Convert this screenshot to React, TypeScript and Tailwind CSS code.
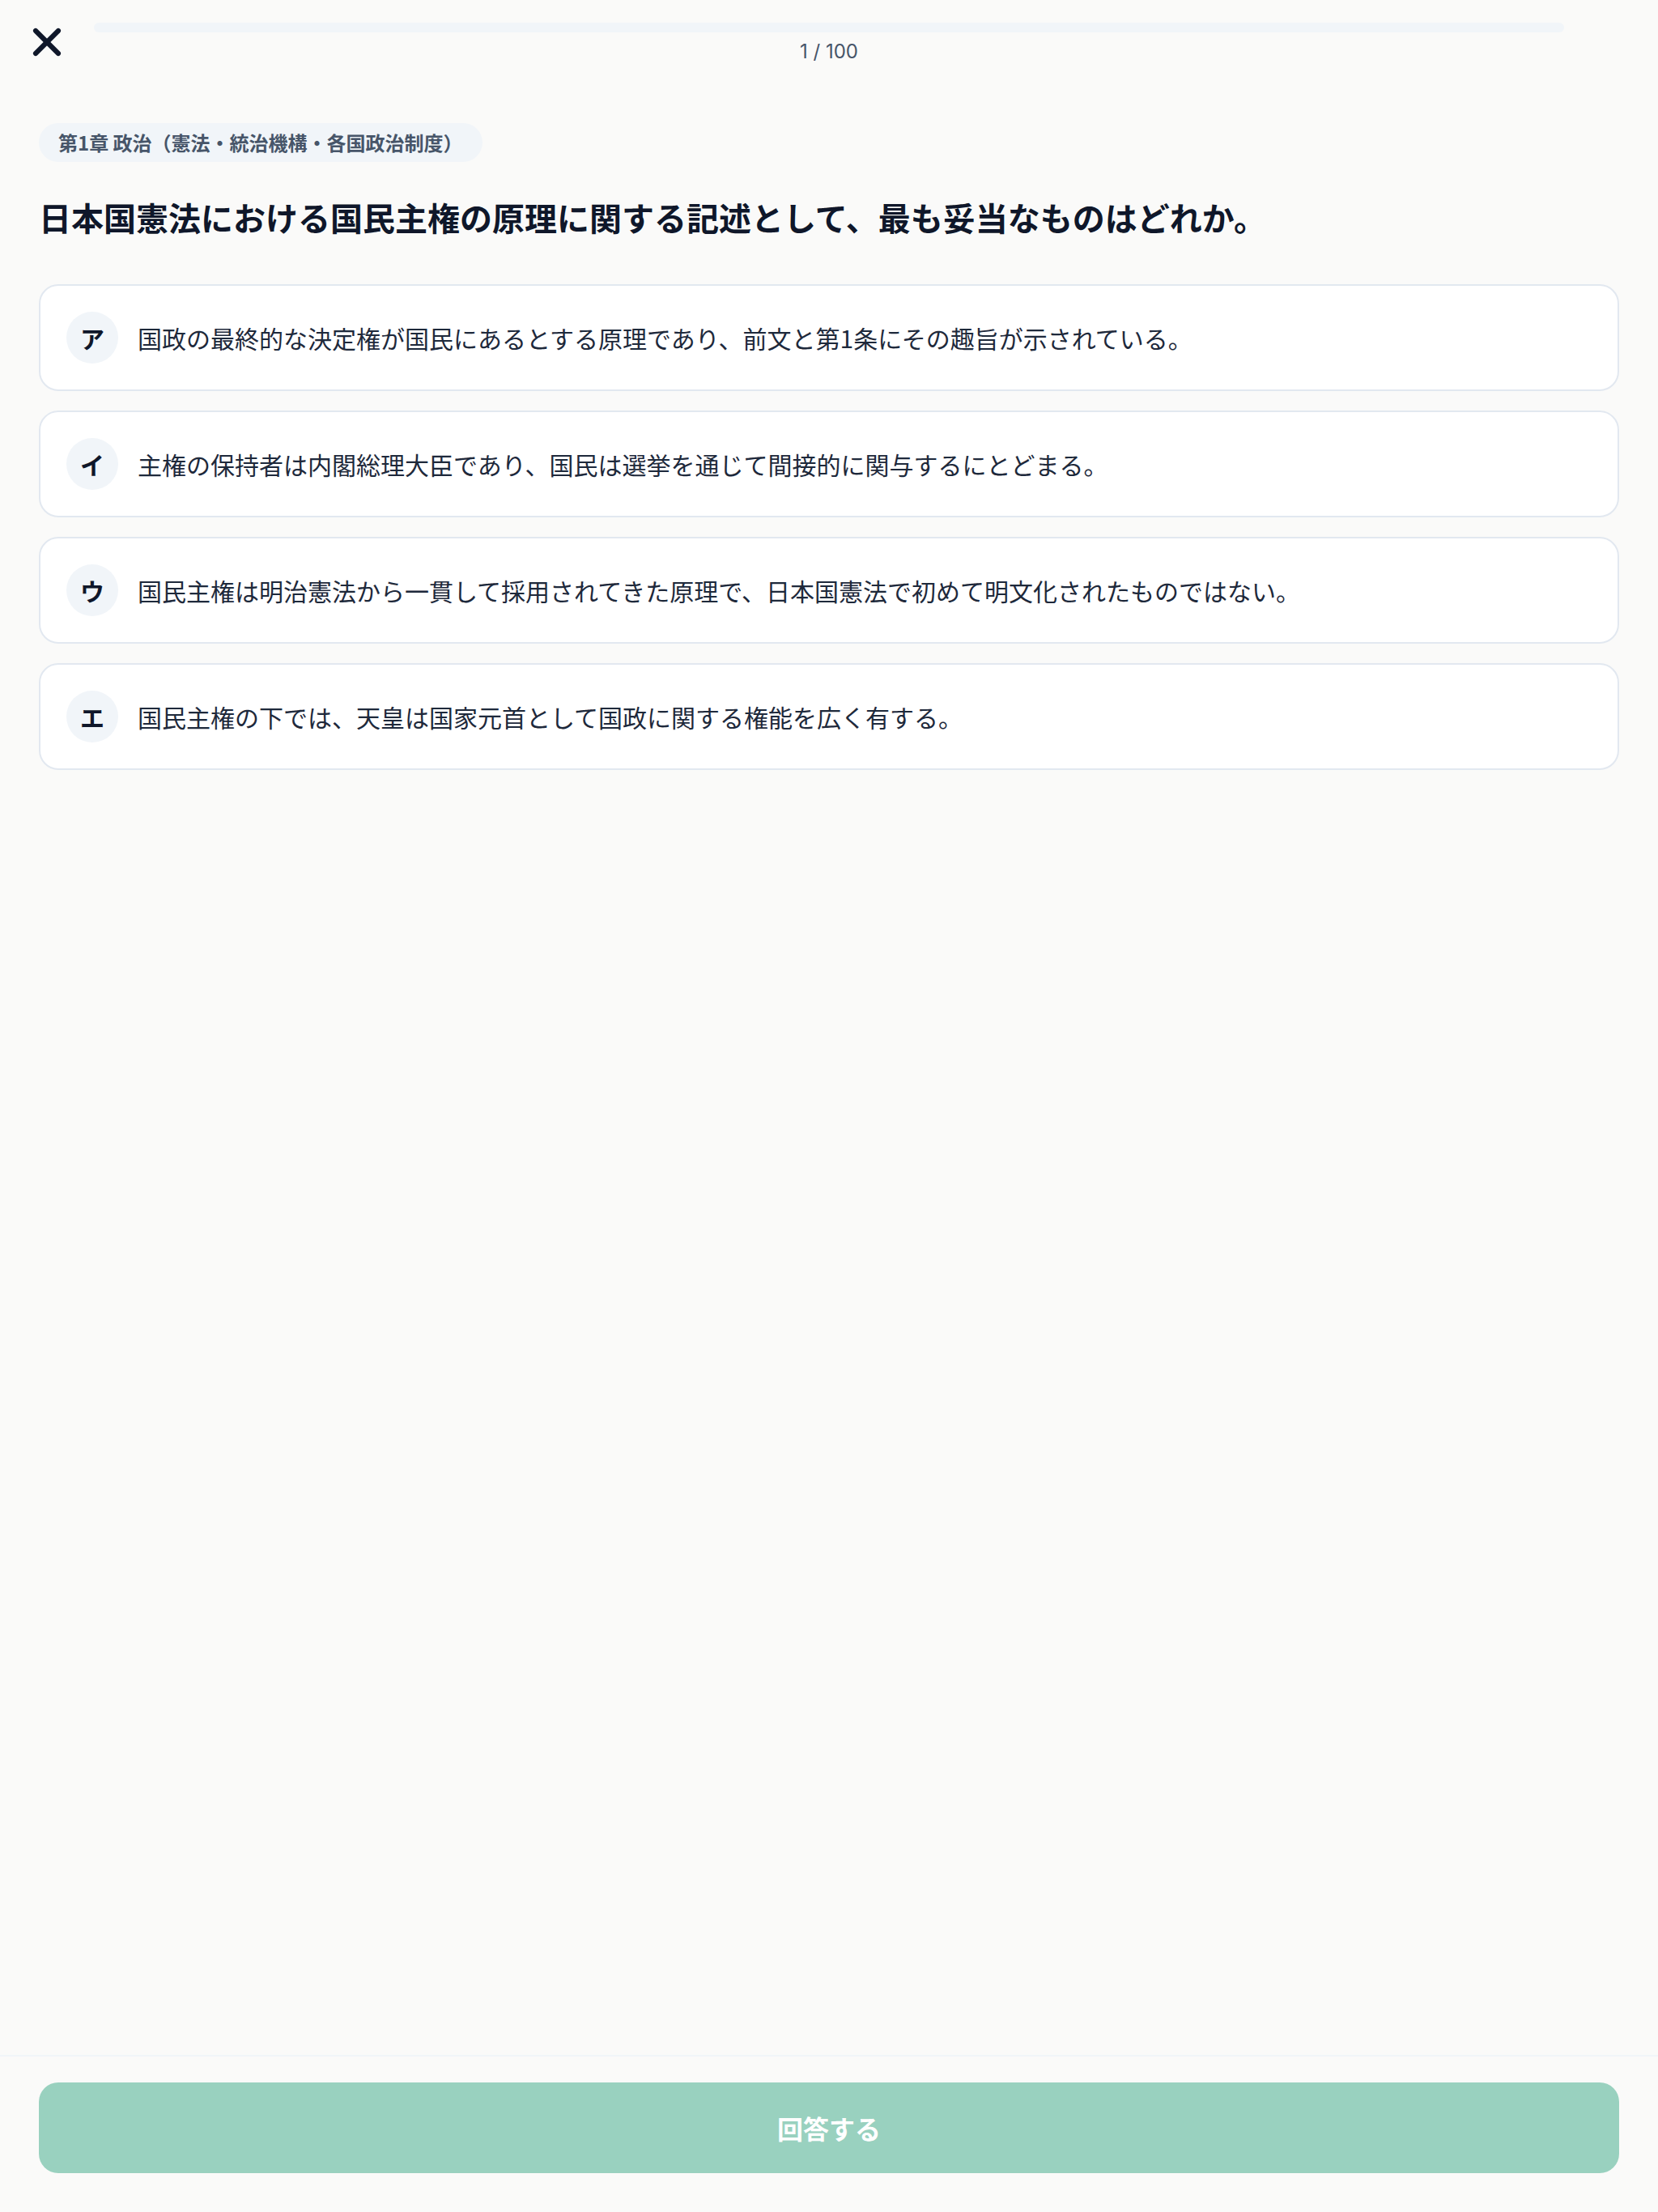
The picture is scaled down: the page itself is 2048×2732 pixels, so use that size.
import { X } from "lucide-react";

const choices = [
  {
    label: "ア",
    text: "国政の最終的な決定権が国民にあるとする原理であり、前文と第1条にその趣旨が示されている。",
  },
  {
    label: "イ",
    text: "主権の保持者は内閣総理大臣であり、国民は選挙を通じて間接的に関与するにとどまる。",
  },
  {
    label: "ウ",
    text: "国民主権は明治憲法から一貫して採用されてきた原理で、日本国憲法で初めて明文化されたものではない。",
  },
  {
    label: "エ",
    text: "国民主権の下では、天皇は国家元首として国政に関する権能を広く有する。",
  },
];

export default function App() {
  return (
    <div className="min-h-screen flex flex-col bg-[#fafaf9] font-['Noto_Sans_CJK_JP','Noto_Sans',sans-serif] text-[#0f172a]">
      {/* header */}
      <header className="flex items-start gap-[30px] px-[30px] pt-[24px]">
        <button className="w-[56px] h-[56px] flex items-center justify-center text-[#0f172a] shrink-0">
          <X size={56} strokeWidth={2.6} />
        </button>
        <div className="flex-1 flex flex-col items-center pt-[4px]">
          <div className="w-full h-[12px] rounded-full bg-[#f1f5f9]" />
          <p className="mt-[8px] text-[24px] leading-[32px] text-[#475569] font-['Inter','Noto_Sans_CJK_JP',sans-serif]">
            1 / 100
          </p>
        </div>
        <div className="w-[56px] shrink-0" />
      </header>

      {/* question */}
      <main className="flex-1 px-[48px] pt-[72px]">
        <span className="inline-flex items-center h-[48px] px-[24px] rounded-full bg-[#f1f5f9] text-[24px] font-bold text-[#475569]">
          第1章 政治（憲法・統治機構・各国政治制度）
        </span>

        <h1 className="mt-[40px] text-[40px] leading-[56px] font-bold text-[#0f172a]">
          日本国憲法における国民主権の原理に関する記述として、最も妥当なものはどれか。
        </h1>

        <div className="mt-[55px] flex flex-col gap-[24px]">
          {choices.map((c) => (
            <button
              key={c.label}
              className="flex items-center gap-[24px] w-full text-left bg-white border-2 border-[#e2e8f0] rounded-[24px] px-[32px] py-[32px]"
            >
              <span className="w-[64px] h-[64px] shrink-0 rounded-full bg-[#f1f5f9] flex items-center justify-center text-[30px] font-bold text-[#0f172a]">
                {c.label}
              </span>
              <span className="text-[30px] leading-[44px] text-[#1e293b]">
                {c.text}
              </span>
            </button>
          ))}
        </div>
      </main>

      {/* footer */}
      <footer className="border-t-2 border-[#f1f5f9] px-[48px] pt-[32px] pb-[48px]">
        <button
          disabled
          className="w-full h-[112px] rounded-[24px] bg-[#99d1bf] text-white text-[32px] font-bold"
        >
          回答する
        </button>
      </footer>
    </div>
  );
}
